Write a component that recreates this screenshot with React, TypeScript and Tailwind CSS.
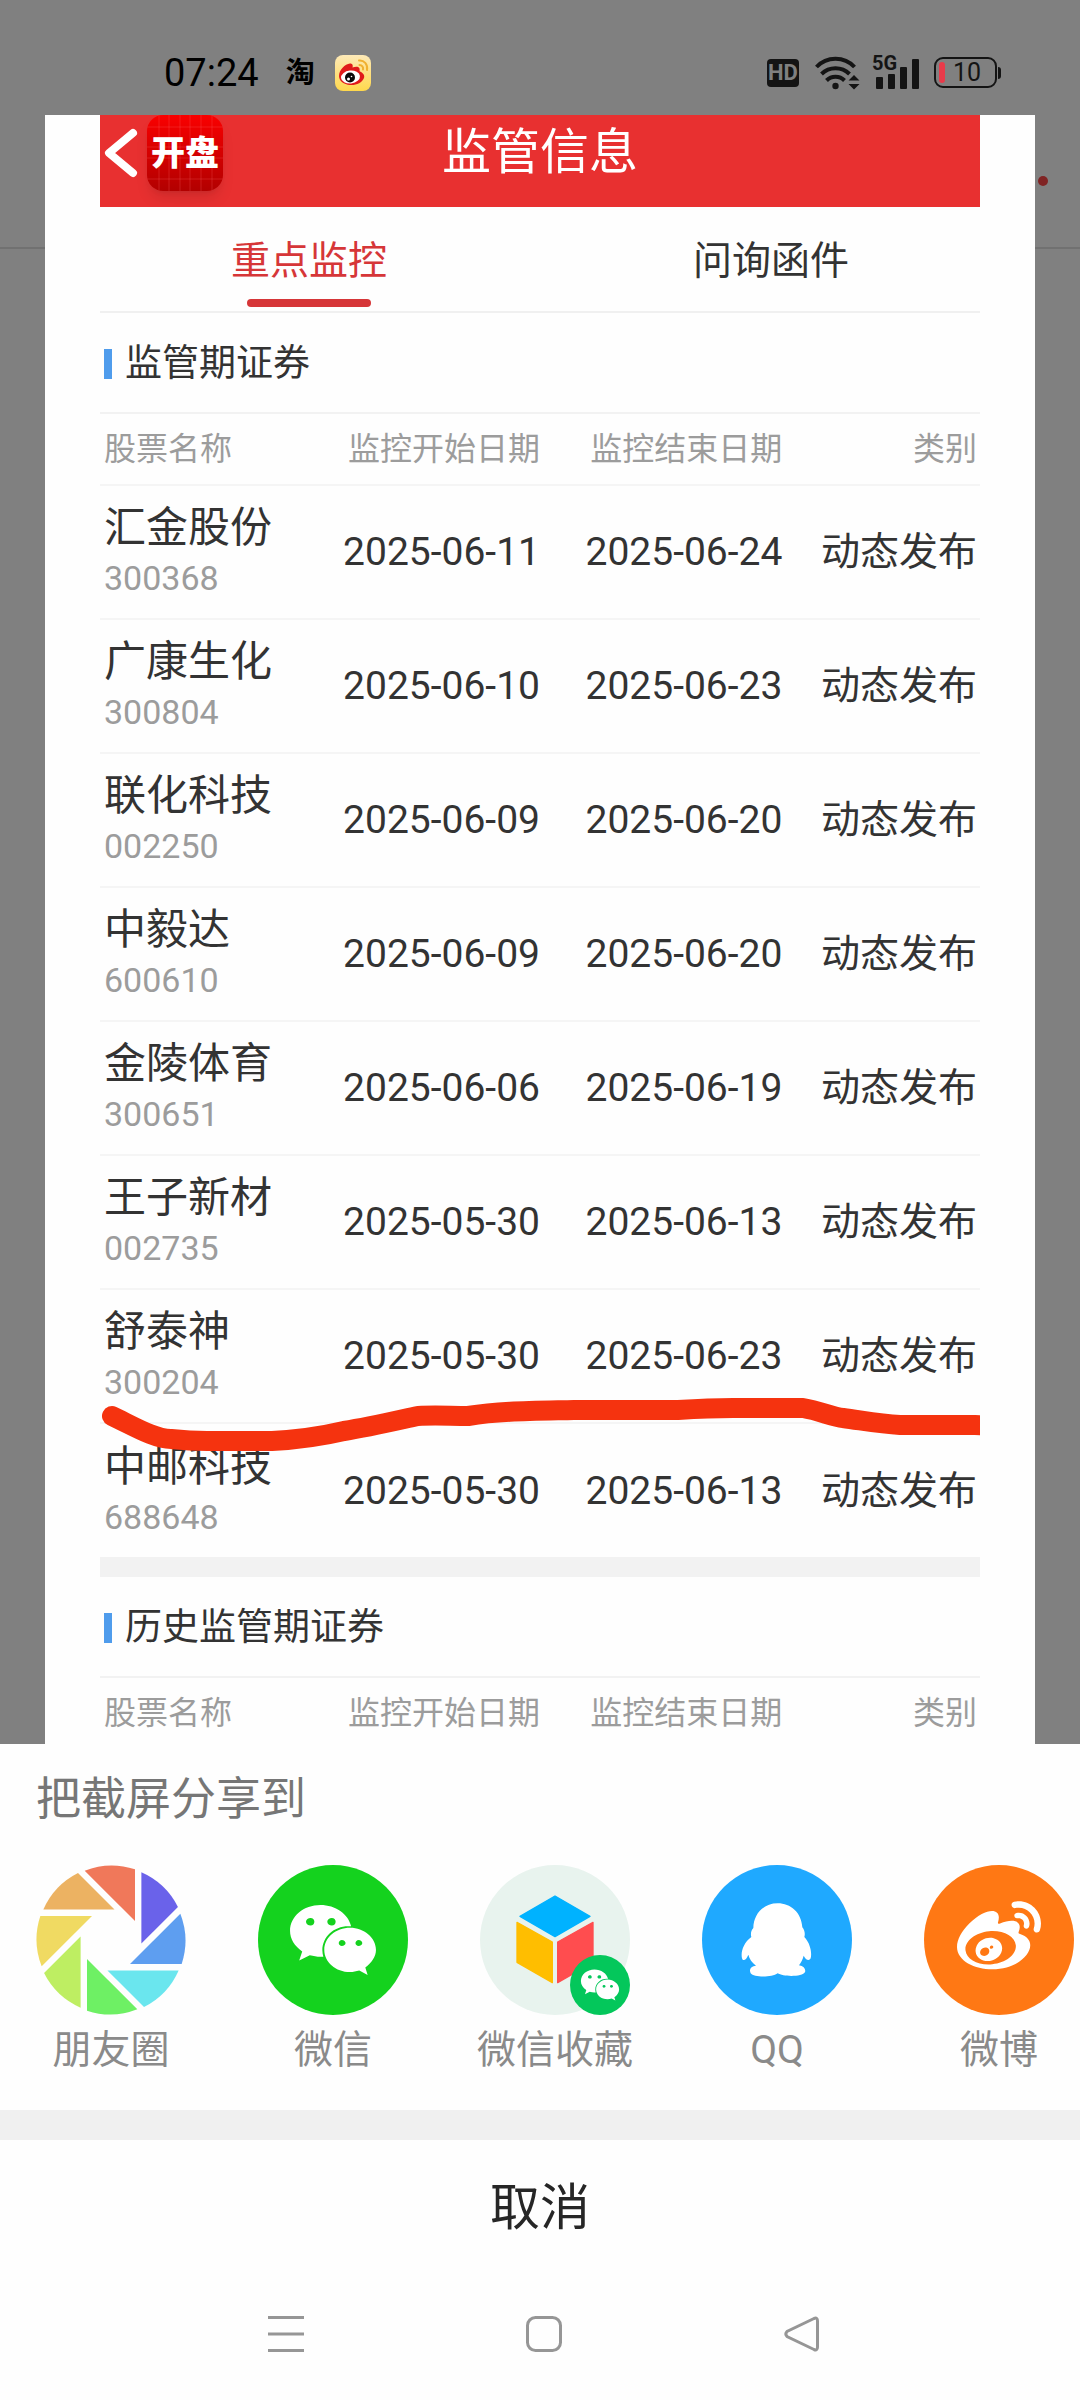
import type { ReactNode } from 'react'
import { FaWeibo, FaWeixin } from 'react-icons/fa'

interface Stock {
  name: string
  code: string
  start: string
  end: string
  category: string
}

interface ShareTarget {
  label: string
  icon: ReactNode
}

const STOCKS: Stock[] = [
  { name: '汇金股份', code: '300368', start: '2025-06-11', end: '2025-06-24', category: '动态发布' },
  { name: '广康生化', code: '300804', start: '2025-06-10', end: '2025-06-23', category: '动态发布' },
  { name: '联化科技', code: '002250', start: '2025-06-09', end: '2025-06-20', category: '动态发布' },
  { name: '中毅达', code: '600610', start: '2025-06-09', end: '2025-06-20', category: '动态发布' },
  { name: '金陵体育', code: '300651', start: '2025-06-06', end: '2025-06-19', category: '动态发布' },
  { name: '王子新材', code: '002735', start: '2025-05-30', end: '2025-06-13', category: '动态发布' },
  { name: '舒泰神', code: '300204', start: '2025-05-30', end: '2025-06-23', category: '动态发布' },
  { name: '中邮科技', code: '688648', start: '2025-05-30', end: '2025-06-13', category: '动态发布' },
]

// Clockwise, starting at the top blade
const BLADES = ['#f0785a', '#6a62ea', '#5e9ef0', '#6ae6ee', '#6ef064', '#beee62', '#f0da62', '#ecb262']

function MomentsIcon() {
  return (
    <svg className="size-[150px]" viewBox="0 0 450 450">
      {BLADES.map((color, i) => (
        <path key={color} d="M146 17A223 223 0 0 1 297 13V168Z" fill={color} transform={`rotate(${i * 45} 225 225)`} />
      ))}
    </svg>
  )
}

function FavoritesIcon() {
  return (
    <span className="relative block size-[150px] rounded-full bg-[#e8f3ee]">
      <svg className="size-full" viewBox="0 0 450 450" strokeLinejoin="round" strokeWidth="4">
        <path d="M225 93L330 154L225 215L120 154Z" fill="#00b2ff" stroke="#00b2ff" />
        <path d="M111 172L217 231V353L111 292Z" fill="#ffbe00" stroke="#ffbe00" />
        <path d="M339 172L233 231V353L339 292Z" fill="#ff4d4f" stroke="#ff4d4f" />
      </svg>
      <span className="absolute right-0 bottom-0 flex size-[60px] items-center justify-center rounded-full bg-[#04c75b] text-white">
        <FaWeixin className="h-9 w-10" />
      </span>
    </span>
  )
}

function QQIcon() {
  return (
    <svg className="size-[150px] rounded-full bg-[#1fa9ff]" viewBox="0 0 450 450" fill="#fff">
      <path d="M227 115C266 115 298 142 301 187C308 196 310 206 307 216C326 236 330 265 326 280C321 290 311 284 305 272C302 284 297 293 291 301C306 304 312 313 309 321C302 336 244 336 227 325C209 338 156 338 146 325C140 312 148 303 162 302C150 293 142 281 139 269C134 281 128 288 122 284C114 270 121 235 148 216C145 205 148 195 154 189C155 147 184 115 227 115Z" />
    </svg>
  )
}

const TARGETS: ShareTarget[] = [
  { label: '朋友圈', icon: <MomentsIcon /> },
  {
    label: '微信',
    icon: (
      <span className="flex size-[150px] items-center justify-center rounded-full bg-[#14d21e] text-white">
        <FaWeixin className="h-20 w-[90px]" />
      </span>
    ),
  },
  { label: '微信收藏', icon: <FavoritesIcon /> },
  { label: 'QQ', icon: <QQIcon /> },
  {
    label: '微博',
    icon: (
      <span className="flex size-[150px] items-center justify-center rounded-full bg-[#ff7814] pb-1 text-white">
        <FaWeibo className="size-[84px]" />
      </span>
    ),
  },
]

function WeiboBadge() {
  return (
    <svg className="ml-5 size-9" viewBox="0 0 36 36">
      <defs>
        <linearGradient id="weibo" x1="0" y1="0" x2="0" y2="1">
          <stop offset="0" stopColor="#fde9b8" />
          <stop offset="1" stopColor="#ffd84c" />
        </linearGradient>
      </defs>
      <rect width="36" height="36" rx="8" fill="url(#weibo)" />
      <path d="M4 21C4 15 10 9 15 8.5C18 8.5 18 11 17.5 12.5C20 11.5 24 11 24.5 13.5C25 15 24 16 25 16.5C28 18 30 20 29 23C27 28 21 30.5 15 30C9 29.5 4 26 4 21Z" fill="#e01a1a" />
      <ellipse cx="15.5" cy="22" rx="9.5" ry="6.5" fill="#fff" transform="rotate(-6 15.5 22)" />
      <circle cx="15" cy="22.5" r="5" fill="#0a0a0a" />
      <circle cx="13.5" cy="24" r="1.5" fill="#fff" />
      <circle cx="16.5" cy="21.5" r="0.8" fill="#fff" />
      <path d="M24 5.5C29 5 33 9 32 15M24.5 10C27 10 28.5 12 28 14.5" fill="none" stroke="#f0b030" strokeWidth="2" strokeLinecap="round" />
    </svg>
  )
}

function StatusBar() {
  return (
    <header className="flex h-[115px] shrink-0 items-center justify-between pt-[31px] pr-[79px] pb-[1px] pl-[164px]">
      <div className="flex items-center text-black">
        <span className="text-[38px] leading-[48px]">07:24</span>
        <span className="ml-[27px] text-[29px] leading-[40px] font-bold">淘</span>
        <WeiboBadge />
      </div>
      <div className="flex items-center text-[#141414]">
        <span className="flex h-7 w-8 items-center justify-center rounded bg-[#141414] text-[22px] leading-7 font-bold text-[#808080]">
          HD
        </span>
        <svg className="ml-4 h-[35px] w-[45px]" viewBox="0 0 45 35" fill="none" stroke="currentColor" strokeWidth="4">
          <path d="M1.5 12A26 26 0 0 1 39.5 12M6.5 19A20 20 0 0 1 34.5 19M11.5 25.5A12.5 12.5 0 0 1 29.5 25.5" />
          <circle cx="20.5" cy="31" r="3.2" fill="currentColor" stroke="none" />
          <path d="M33.5 25.5L39 20L44.5 25.5ZM33.5 29L39 34.5L44.5 29Z" fill="currentColor" stroke="none" />
        </svg>
        <div className="relative ml-3 h-[35px] w-[48px]">
          <span className="absolute top-0 left-0 text-[20px] leading-[17px] font-bold">5G</span>
          <svg className="size-full" viewBox="0 0 48 35" fill="currentColor">
            <rect x="4" y="22" width="7" height="12" rx="1" />
            <rect x="16" y="19" width="7" height="15" rx="1" />
            <rect x="28" y="12" width="7" height="22" rx="1" />
            <rect x="40" y="4" width="7" height="30" rx="1" />
          </svg>
        </div>
        <div className="ml-[14px] flex h-[31px] w-[63px] items-center rounded-[9px] border-2 border-[#141414] pl-[3px]">
          <span className="h-[21px] w-[6px] rounded-[3px] bg-[#e83a4a]" />
          <span className="ml-2 text-[25px] leading-[27px]">10</span>
        </div>
        <span className="ml-[1px] h-3 w-[3px] rounded-r bg-[#141414]" />
      </div>
    </header>
  )
}

function AppBar() {
  return (
    <div className="grid h-[92px] grid-cols-[1fr_auto_1fr] items-center overflow-hidden bg-[#e83030] pb-5 text-white">
      <div className="flex items-center">
        <button type="button" aria-label="返回" className="pl-1">
          <svg className="h-[50px] w-[34px]" viewBox="0 0 34 50" fill="none" stroke="currentColor" strokeWidth="8" strokeLinecap="round" strokeLinejoin="round">
            <path d="M29 5L5 25L29 45" />
          </svg>
        </button>
        <span className="relative ml-[9px] flex size-[76px] items-center justify-center overflow-hidden rounded-2xl bg-gradient-to-b from-[#fa0000] to-[#b20000] text-[34px] leading-[44px] font-black shadow-lg">
          <svg className="absolute inset-0 size-full" viewBox="0 0 76 76" stroke="#ff6a6a" strokeOpacity="0.25">
            <path d="M12 0V76M22 0V76M33 0V76M43 0V76M54 0V76M65 0V76M0 12H76M0 32H76M0 43H76M0 64H76" />
          </svg>
          <span className="relative">开盘</span>
        </span>
      </div>
      <h1 className="text-[49px] leading-[60px]">监管信息</h1>
    </div>
  )
}

function Tabs() {
  return (
    <nav className="flex h-[106px] justify-between border-b-2 border-[#f0f0f0] px-[131px] text-[39px] leading-[52px] text-[#333]">
      <button type="button" className="flex flex-col items-center pt-7 text-[#d63638]">
        重点监控
        <span className="mt-3 h-2 w-[124px] rounded bg-[#d63638]" />
      </button>
      <button type="button" className="flex flex-col items-center pt-7">
        问询函件
      </button>
    </nav>
  )
}

function SectionTitle({ children }: { children: ReactNode }) {
  return (
    <h2 className="flex h-[101px] items-center gap-[13px] border-b-2 border-[#f2f2f2] pt-[2px] pl-1 text-[37px] leading-[52px] text-[#333]">
      <span className="h-[30px] w-2 bg-[#4f9cec]" />
      {children}
    </h2>
  )
}

function StockTable({ rows }: { rows: Stock[] }) {
  return (
    <table className="w-full table-fixed border-collapse text-[39px] leading-[52px] text-[#333]">
      <thead>
        <tr className="h-[71px] border-b-2 border-[#f5f5f5] text-right text-[32px] leading-[44px] text-[#9c9c9c]">
          <th className="w-[24%] pl-1 text-left font-normal">股票名称</th>
          <th className="w-[26%] font-normal">监控开始日期</th>
          <th className="w-[28%] pr-1 font-normal">监控结束日期</th>
          <th className="w-[22%] pr-[3px] font-normal">类别</th>
        </tr>
      </thead>
      <tbody>
        {rows.map((row) => (
          <tr key={row.code} className="h-[134px] border-b-2 border-[#f5f5f5] text-right last:border-0">
            <td className="pl-1 text-left">
              <div className="text-[42px] leading-[52px]">{row.name}</div>
              <div className="text-[34px] leading-[48px] text-[#9c9c9c]">{row.code}</div>
            </td>
            <td>{row.start}</td>
            <td className="pr-1">{row.end}</td>
            <td className="pr-[3px]">{row.category}</td>
          </tr>
        ))}
      </tbody>
    </table>
  )
}

function Screenshot() {
  return (
    <main className="relative mx-[45px] min-h-0 flex-1 overflow-hidden bg-[#fefefe] px-[55px]">
      <AppBar />
      <Tabs />
      <SectionTitle>监管期证券</SectionTitle>
      <div className="relative">
        <StockTable rows={STOCKS} />
        {/* Hand-drawn marker line */}
        <svg className="absolute bottom-[104px] left-0 h-[60px] w-full" viewBox="0 0 880 60" preserveAspectRatio="none" fill="none" stroke="#f5330f" strokeWidth="20" strokeLinecap="round" strokeLinejoin="round">
          <path d="M12 23C35 34 55 46 71 46Q90 48 107 48H172Q210 46 244 38C270 34 295 28 318 23C335 22 350 23 368 23C400 18 430 18 474 17H578Q610 15 633 15H703C720 18 733 24 743 25C765 28 780 31 800 32H875L900 33" />
        </svg>
      </div>
      <div className="h-5 bg-[#f2f2f2]" />
      <SectionTitle>历史监管期证券</SectionTitle>
      <StockTable rows={[]} />
    </main>
  )
}

function ShareSheet() {
  return (
    <section className="shrink-0 bg-[#fefefe]">
      <h2 className="pt-[26px] pb-[35px] pl-9 text-[45px] leading-[60px] text-[#767676]">把截屏分享到</h2>
      <ul className="flex overflow-hidden pb-[31px]">
        {TARGETS.map((target) => (
          <li key={target.label} className="w-[222px] shrink-0">
            <button type="button" className="flex w-full flex-col items-center gap-[6px] text-[39px] leading-[58px] text-[#8a8a8a]">
              {target.icon}
              {target.label}
            </button>
          </li>
        ))}
      </ul>
      <div className="h-[30px] bg-[#f0f0f0]" />
      <button type="button" className="block h-[132px] w-full pt-1 text-[50px] leading-[64px] text-[#262626]">
        取消
      </button>
      <nav className="flex h-[128px] items-center justify-center pb-1 pl-2 text-[#969696]">
        <button type="button" aria-label="最近任务" className="flex w-[258px] justify-center">
          <svg className="size-9" viewBox="0 0 36 36" stroke="currentColor" strokeWidth="3">
            <path d="M0 1.5H36M0 18H36M0 34.5H36" />
          </svg>
        </button>
        <button type="button" aria-label="主页" className="flex w-[258px] justify-center">
          <svg className="size-9" viewBox="0 0 36 36" fill="none" stroke="currentColor" strokeWidth="3">
            <rect x="1.5" y="1.5" width="33" height="33" rx="8" />
          </svg>
        </button>
        <button type="button" aria-label="返回" className="flex w-[258px] justify-center">
          <svg className="size-9" viewBox="0 0 36 36" fill="none" stroke="currentColor" strokeWidth="3">
            <path d="M30 2.5L3 15.5Q0.5 18 3 20.5L30 33.5Q33.5 35 33.5 31V5Q33.5 1 30 2.5Z" />
          </svg>
        </button>
      </nav>
    </section>
  )
}

export default function App() {
  return (
    <div
      lang="zh-CN"
      className="relative flex h-screen flex-col bg-[#808080] font-[Roboto,'Noto_Sans_CJK_SC',sans-serif]"
    >
      {/* Dimmed page behind the preview */}
      <div className="absolute inset-x-0 top-[247px] h-[2px] bg-[#717171]" />
      <div className="absolute top-[176px] right-[32px] size-[10px] rounded-full bg-[#802424]" />
      <StatusBar />
      <Screenshot />
      <ShareSheet />
    </div>
  )
}
